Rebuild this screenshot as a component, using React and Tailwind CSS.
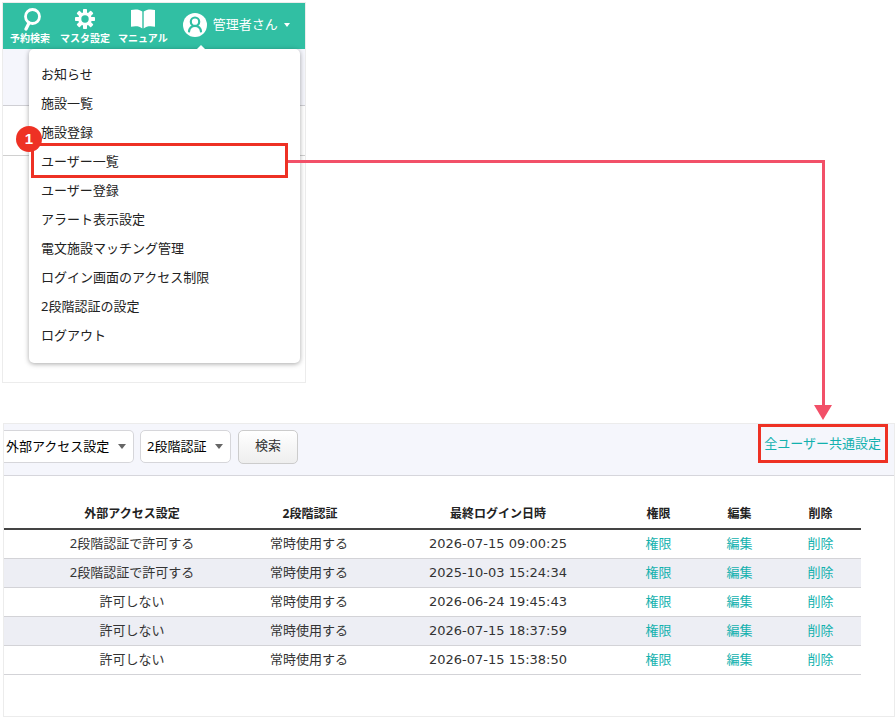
const menuItems = [
  'お知らせ',
  '施設一覧',
  '施設登録',
  'ユーザー一覧',
  'ユーザー登録',
  'アラート表示設定',
  '電文施設マッチング管理',
  'ログイン画面のアクセス制限',
  '2段階認証の設定',
  'ログアウト',
]

const users = [
  { access: '2段階認証で許可する', twoStep: '常時使用する', lastLogin: '2026-07-15 09:00:25' },
  { access: '2段階認証で許可する', twoStep: '常時使用する', lastLogin: '2025-10-03 15:24:34' },
  { access: '許可しない', twoStep: '常時使用する', lastLogin: '2026-06-24 19:45:43' },
  { access: '許可しない', twoStep: '常時使用する', lastLogin: '2026-07-15 18:37:59' },
  { access: '許可しない', twoStep: '常時使用する', lastLogin: '2026-07-15 15:38:50' },
]

const actions = ['権限', '編集', '削除']

/* ---------- Icons ---------- */

const SearchIcon = () => (
  <svg className="h-6 w-6" viewBox="0 0 24 24" fill="none" stroke="currentColor">
    <circle cx="14.5" cy="9.5" r="7" strokeWidth="2.8" />
    <path d="M11 16 8 22" strokeWidth="3.2" strokeLinecap="round" />
  </svg>
)

const GearIcon = () => (
  <svg className="h-6 w-6" viewBox="0 0 24 24">
    <g fill="currentColor">
      <rect x="10" y="2" width="4" height="20" rx="0.8" />
      <rect x="10" y="2" width="4" height="20" rx="0.8" transform="rotate(45 12 12)" />
      <rect x="10" y="2" width="4" height="20" rx="0.8" transform="rotate(90 12 12)" />
      <rect x="10" y="2" width="4" height="20" rx="0.8" transform="rotate(135 12 12)" />
      <circle cx="12" cy="12" r="6.8" />
    </g>
    <circle cx="12" cy="12" r="3.7" fill="#31bfa3" />
  </svg>
)

const BookIcon = () => (
  <svg className="h-6 w-6" viewBox="0 0 24 24" fill="currentColor">
    <path d="M0 3C4 2 8.500 2.200 11.300 4.500V21.400C8.500 19 4 18.800 0 19.800Z" />
    <path d="M24 3C20 2 15.500 2.200 12.700 4.500V21.400C15.500 19 20 18.800 24 19.800Z" />
  </svg>
)

const UserIcon = () => (
  <svg className="h-6 w-6" viewBox="0 0 24 24">
    <circle cx="12" cy="12" r="12" fill="#fff" />
    <g fill="none" stroke="#31bfa3" strokeWidth="2.2">
      <circle cx="12" cy="8.700" r="4.200" />
      <path d="M6 18.500C6.400 15.200 8.600 13 12 13S17.600 15.200 18 18.500" strokeLinecap="round" />
    </g>
  </svg>
)

/* ---------- Parts ---------- */

const NavButton = ({ icon, label }) => (
  <button className="flex flex-col items-center text-[10px] leading-[14px] font-bold">
    {icon}
    {label}
  </button>
)

const FilterSelect = ({ label, className }) => (
  <div className="relative">
    <select
      aria-label={label}
      className={`block h-[33px] appearance-none border border-[#d6d6da] bg-white text-[13px] text-black ${className}`}
    >
      <option>{label}</option>
    </select>
    <span className="pointer-events-none absolute top-3.5 right-2 border-x-4 border-t-[5px] border-x-transparent border-t-[#666]" />
  </div>
)

const AdminMenu = () => (
  <section className="relative w-[304px] border border-[#ececec]">
    <header className="flex h-[46px] items-start bg-[#31bfa3] pt-1 pl-[7px] text-white">
      <NavButton icon={<SearchIcon />} label="予約検索" />
      <div className="ml-2.5">
        <NavButton icon={<GearIcon />} label="マスタ設定" />
      </div>
      <div className="ml-2">
        <NavButton icon={<BookIcon />} label="マニュアル" />
      </div>
      <button className="mt-1.5 ml-[15px] flex items-center gap-1.5 text-[13px] leading-5">
        <UserIcon />
        <span className="pb-0.5">管理者さん</span>
        <span className="border-x-[3px] border-t-4 border-x-transparent border-t-white" />
      </button>
    </header>
    <div className="h-[57px] border-b border-[#cfcfd4] bg-[#f5f6fc]" />
    <div className="h-[50px] border-b border-[#d0d0d0]" />
    <div className="h-[226px]" />

    <nav className="absolute top-[46px] right-[5px] left-[26px] rounded-[5px] bg-white pt-[11px] pb-[13px] shadow-[0_1px_5px_rgba(0,0,0,0.35)]">
      <span className="absolute -top-1 left-[167px] border-x-[5px] border-b-[5px] border-x-transparent border-b-white" />
      <ul>
        {menuItems.map((item) => (
          <li key={item} className="relative">
            <a href="#" className="block pl-3 text-[13px] leading-[29px] text-[#222]">
              {item}
            </a>
            {item === 'ユーザー一覧' && (
              <span className="pointer-events-none absolute -top-1 right-3 -bottom-0.5 left-0.5 border-3 border-[#ee3124]">
                <span className="absolute -top-5 -left-[18px] flex size-[26px] items-center justify-center rounded-full bg-[#ee3124] font-[family-name:'Liberation_Sans',sans-serif] text-[15px] font-bold text-white">
                  1
                </span>
              </span>
            )}
          </li>
        ))}
      </ul>
    </nav>
  </section>
)

const UserList = () => (
  <section className="ml-px border border-[#ececec] pb-[41px]">
    <div className="flex h-[52px] items-start border-b border-[#d6d6dc] bg-[#f5f6fc] pt-1.5">
      <FilterSelect label="外部アクセス設定" className="w-[130px] rounded-r-[5px] border-l-0 pl-0.5" />
      <div className="ml-1.5">
        <FilterSelect label="2段階認証" className="w-[91px] rounded-[5px] pl-1.5" />
      </div>
      <button className="ml-[7px] h-[34px] w-[60px] rounded-[5px] border border-[#ccc] bg-linear-to-b from-white to-[#eee] pb-0.5 text-[13px] text-[#333]">
        検索
      </button>
      <a
        href="#"
        className="-mt-1.5 mr-1.5 ml-auto border-3 border-[#ee3124] pr-1 pl-[3px] text-[13px] leading-[33px] text-[#12b1ae]"
      >
        全ユーザー共通設定
      </a>
    </div>

    <div className="pt-[23px] pr-[33px]">
      <table className="w-full table-fixed border-collapse text-center text-[13px] text-[#333]">
        <thead>
          <tr className="h-[30px] border-b-2 border-[#444] text-xs text-[#222]">
            <th className="pl-[18px]">外部アクセス設定</th>
            <th className="w-34">2段階認証</th>
            <th className="w-60">最終ログイン日時</th>
            {actions.map((action) => (
              <th key={action} className="w-[81px]">
                {action}
              </th>
            ))}
          </tr>
        </thead>
        <tbody>
          {users.map((user, i) => (
            <tr key={i} className="border-b border-[#d3d3d7] leading-[26px] even:bg-[#edeef4]">
              <td className="pb-0.5 pl-[18px]">{user.access}</td>
              <td className="pr-0.5 pb-0.5">{user.twoStep}</td>
              <td className="font-[family-name:'DejaVu_Sans',sans-serif]">{user.lastLogin}</td>
              {actions.map((action) => (
                <td key={action} className="pb-0.5">
                  <a href="#" className="text-[#12b1ae]">
                    {action}
                  </a>
                </td>
              ))}
            </tr>
          ))}
        </tbody>
      </table>
    </div>
  </section>
)

/* Arrow from the highlighted menu item to the common settings link */
const Connector = () => (
  <div className="pointer-events-none absolute top-40 right-[70px] left-72 h-[246px] border-t-3 border-r-3 border-[#f25068]">
    <span className="absolute -right-[10px] -bottom-3.5 border-x-[9px] border-t-[15px] border-x-transparent border-t-[#f25068]" />
  </div>
)

export default function App() {
  return (
    <main className="relative bg-white pt-0.5 pl-0.5 font-[family-name:'Noto_Sans','Noto_Sans_CJK_JP',sans-serif]">
      <AdminMenu />
      <div className="h-10" />
      <UserList />
      <Connector />
    </main>
  )
}
